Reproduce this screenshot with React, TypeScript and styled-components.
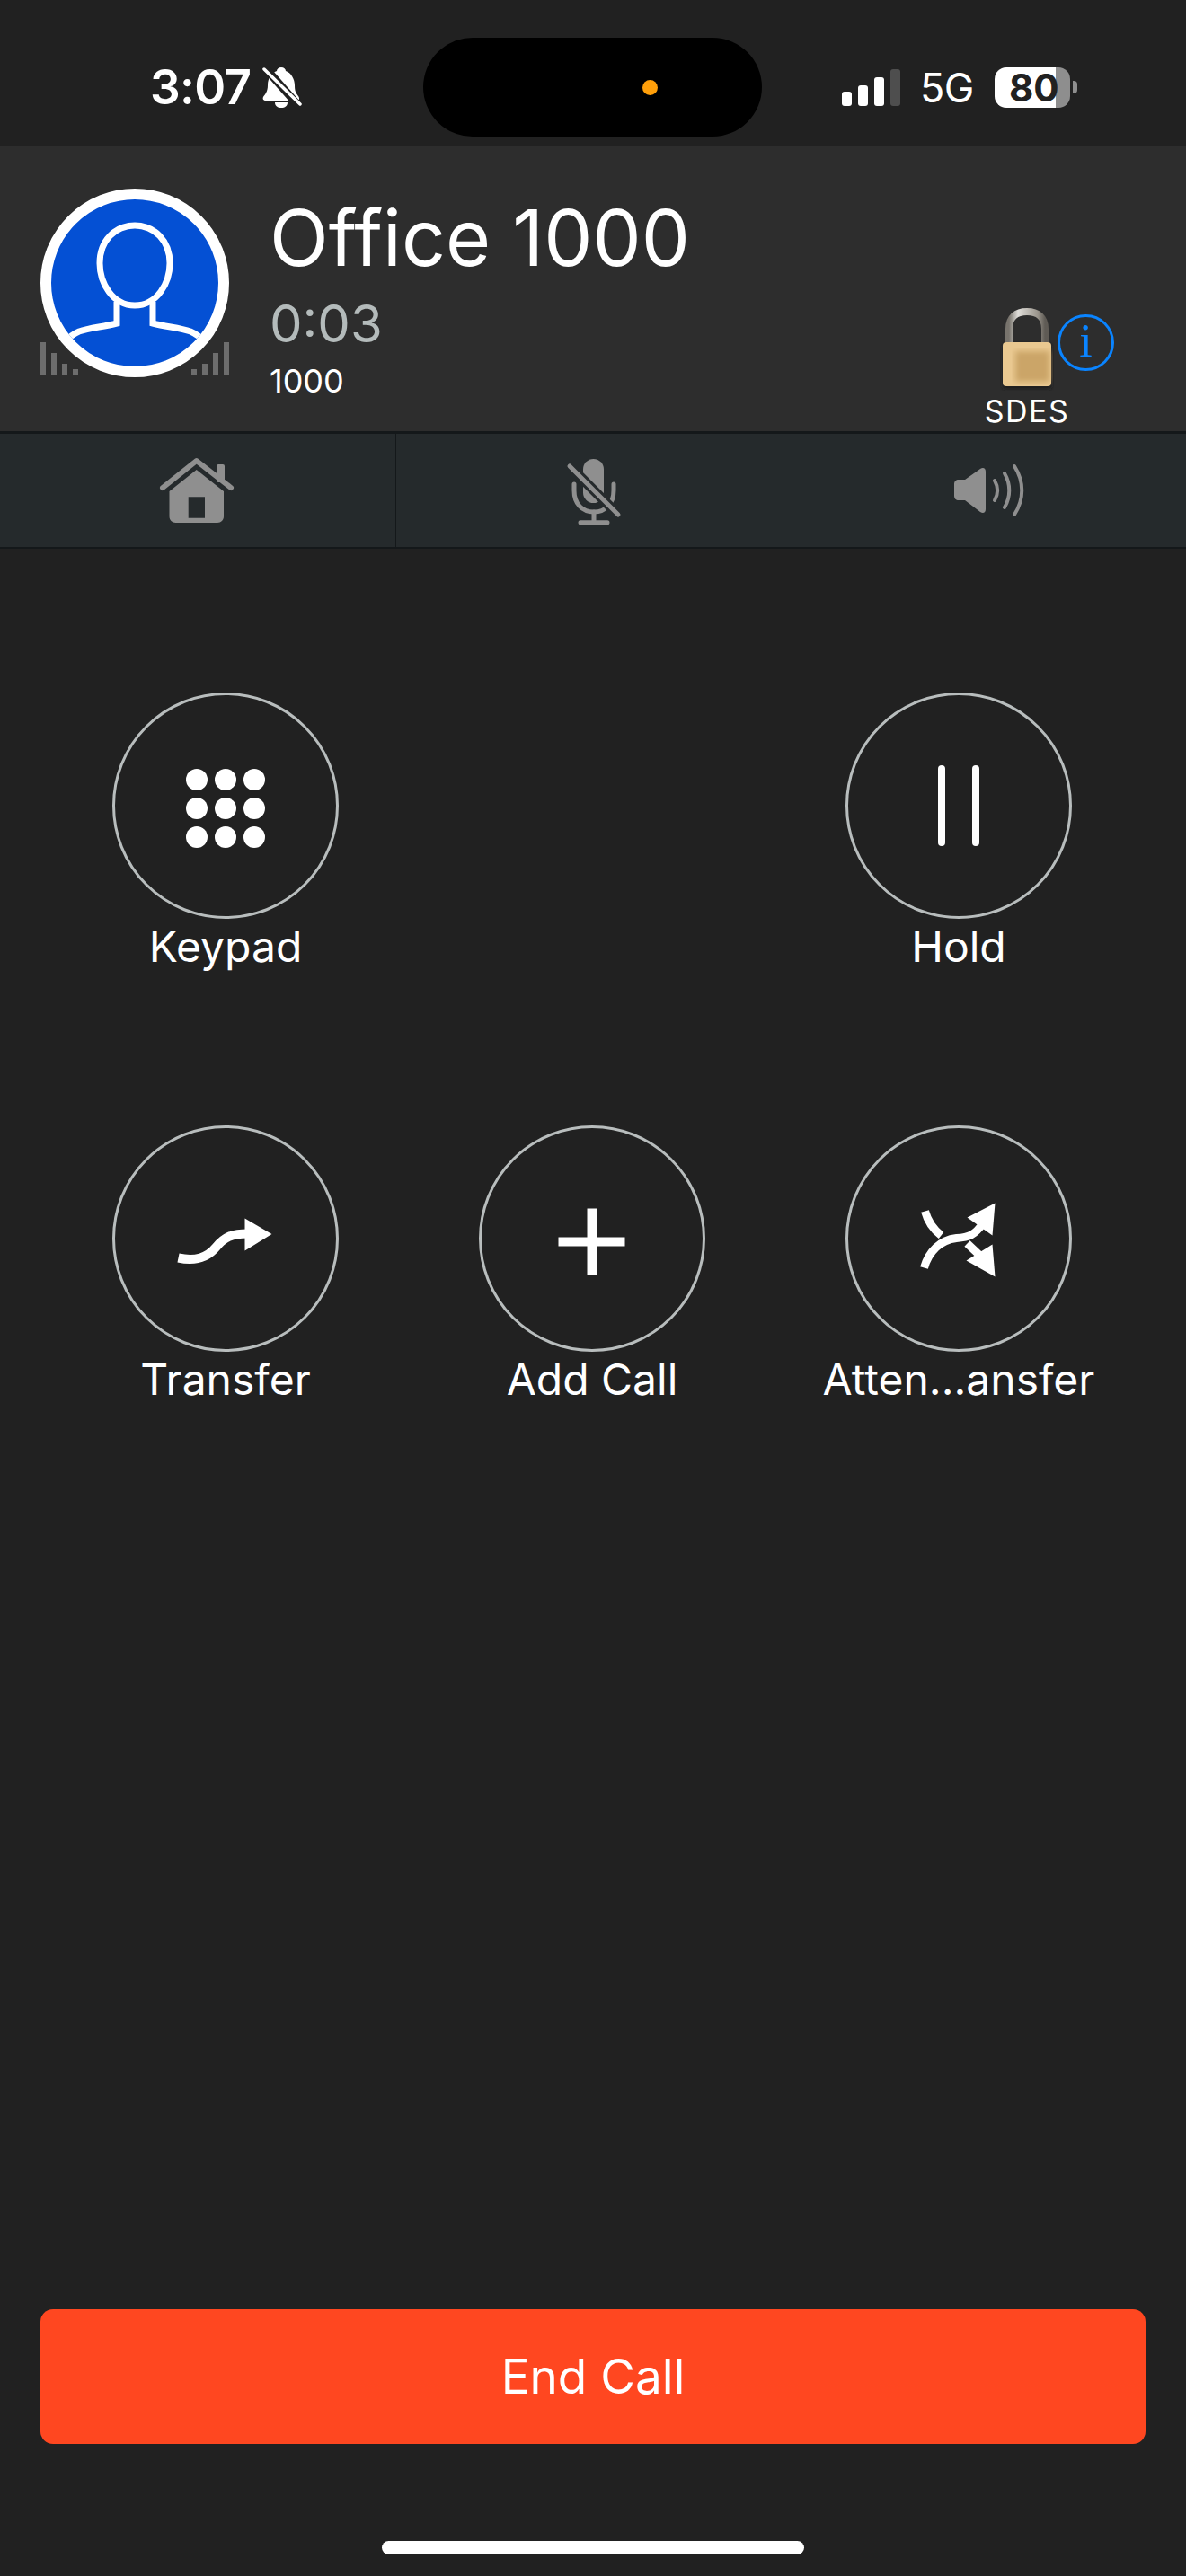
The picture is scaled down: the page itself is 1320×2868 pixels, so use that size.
import React from 'react'
import styled, { createGlobalStyle } from 'styled-components'

const GlobalStyle = createGlobalStyle`
  html, body {
    margin: 0;
    padding: 0;
    background: #212121;
  }
  * {
    box-sizing: border-box;
  }
`

const Screen = styled.div`
  width: 1320px;
  height: 2868px;
  display: flex;
  flex-direction: column;
  overflow: hidden;
  background: #212121;
  color: #fff;
  font-family: Inter, 'Liberation Sans', sans-serif;
`

/* status bar */
const StatusBar = styled.div`
  height: 162px;
  display: grid;
  grid-template-columns: 471px 377px 1fr;
  padding-top: 42px;
`
const StatusLeft = styled.div`
  height: 110px;
  display: flex;
  align-items: center;
  gap: 11px;
  padding-left: 167px;
`
const Time = styled.span`
  font-size: 53px;
  font-weight: 600;
  line-height: 1;
  letter-spacing: -0.7px;
`
const Island = styled.div`
  height: 110px;
  background: #000;
  border-radius: 55px;
  display: flex;
  align-items: center;
  justify-content: center;
`
const OrangeDot = styled.div`
  width: 17px;
  height: 17px;
  border-radius: 50%;
  background: #ff9f0a;
  margin-left: 128px;
`
const StatusRight = styled.div`
  height: 110px;
  display: flex;
  align-items: center;
  padding-left: 89px;
`
const SignalBars = styled.div`
  display: flex;
  align-items: flex-end;
  gap: 7px;
  height: 41px;
`
const SignalBar = styled.div<{ $h: number; $off?: boolean }>`
  width: 11px;
  height: ${p => p.$h}px;
  border-radius: 3px;
  background: ${p => (p.$off ? '#4e4e4e' : '#fff')};
`
const Network = styled.span`
  font-size: 45px;
  line-height: 1;
  margin-left: 22px;
  letter-spacing: -0.5px;
`
const Battery = styled.div`
  width: 84px;
  height: 45px;
  margin-left: 23px;
  border-radius: 13px;
  background: linear-gradient(to right, #fff 68px, #8e8e8e 68px);
  color: #212121;
  font-size: 42px;
  font-weight: 700;
  line-height: 45px;
  padding-left: 16px;
`
const BatteryNub = styled.div`
  width: 5px;
  height: 14px;
  margin-left: 3px;
  border-radius: 0 4px 4px 0;
  background: #8e8e8e;
`

/* caller header */
const CallHeader = styled.header`
  height: 318px;
  background: #2d2d2d;
  display: flex;
  padding: 48px 0 0 45px;
`
const AvatarWrap = styled.div`
  position: relative;
  width: 210px;
  height: 210px;
  flex: none;
`
const Meter = styled.div<{ $side: 'left' | 'right' }>`
  position: absolute;
  top: 171px;
  ${p => p.$side}: 0;
  height: 36px;
  display: flex;
  align-items: flex-end;
  gap: 6px;
`
const MeterBar = styled.div<{ $h: number }>`
  width: 6px;
  height: ${p => p.$h}px;
  background: #6d6d6d;
`
const Avatar = styled.div`
  position: relative;
  width: 210px;
  height: 210px;
  border-radius: 50%;
  border: 12px solid #fff;
  background: #0450d4;
  overflow: hidden;
`
const CallerInfo = styled.div`
  display: flex;
  flex-direction: column;
  margin-left: 45px;
  flex: 1;
`
const CallerName = styled.div`
  font-size: 86px;
  line-height: 104px;
  margin-top: 3px;
  white-space: nowrap;
`
const CallTimer = styled.div`
  font-size: 58px;
  line-height: 70px;
  color: #b4bbbb;
  margin-top: 8px;
`
const CallerNumber = styled.div`
  font-size: 36px;
  line-height: 42px;
  margin-top: 8px;
`
const SecurityBlock = styled.div`
  position: relative;
  width: 90px;
  margin: 133px 132px 0 0;
  display: flex;
  flex-direction: column;
  align-items: center;
`
const SecurityLabel = styled.div`
  font-size: 34px;
  line-height: 40px;
  letter-spacing: 1.5px;
  margin-top: 3px;
  white-space: nowrap;
`
const InfoBadge = styled.div`
  position: absolute;
  left: 79px;
  top: 7px;
  width: 63px;
  height: 63px;
  border-radius: 50%;
  border: 3px solid #0a84ff;
  color: #0a84ff;
  font-family: 'Liberation Serif', serif;
  font-size: 52px;
  line-height: 54px;
  text-align: center;
`

/* audio toolbar */
const Toolbar = styled.nav`
  display: grid;
  grid-template-columns: 440px 440px 1fr;
  gap: 1px;
  height: 131px;
  padding: 3px 0 2px;
  background: #14181a;
`
const ToolCell = styled.div`
  background: #252a2c;
  display: flex;
  align-items: center;
  justify-content: center;
`

/* call actions */
const Actions = styled.main`
  flex: 1;
  display: grid;
  grid-template-columns: repeat(3, 408px);
  grid-auto-rows: 482px;
  padding: 160px 0 0 47px;
`
const Action = styled.div<{ $col?: number }>`
  display: flex;
  flex-direction: column;
  align-items: center;
  grid-column: ${p => p.$col ?? 'auto'};
`
const ActionCircle = styled.div`
  width: 252px;
  height: 252px;
  border-radius: 50%;
  border: 3.5px solid #b8bdbd;
  display: flex;
  align-items: center;
  justify-content: center;
`
const ActionLabel = styled.div`
  font-size: 48px;
  line-height: 58px;
  margin-top: 2px;
  white-space: nowrap;
`

/* bottom */
const Footer = styled.footer`
  display: flex;
  flex-direction: column;
  align-items: center;
  padding: 0 45px 24px;
`
const EndCallButton = styled.button`
  width: 100%;
  height: 150px;
  border: 0;
  border-radius: 14px;
  background: #ff4720;
  color: #fff;
  font-family: inherit;
  font-size: 53px;
`
const HomeIndicator = styled.div`
  width: 470px;
  height: 15px;
  margin-top: 108px;
  border-radius: 8px;
  background: #fff;
`

const MutedBellIcon = () => (
  <svg width="46" height="48" viewBox="288 74 46 48">
    <path
      fill="#fff"
      d="M311 76c3 0 5 2 5 4 6 2 10 9 10 16 0 6 1 8 4 12 2 3 1 5-2 5h-34c-3 0-4-2-3-4 2-3 5-6 5-13 0-8 4-14 10-16 0-2 2-4 5-4z"
    />
    <path fill="#fff" d="M304 115h14c0 4-3 6-7 6s-7-2-7-6z" />
    <path d="M290 73l44 50" stroke="#212121" strokeWidth="9" />
    <path d="M292 78l40 39" stroke="#fff" strokeWidth="3.5" strokeLinecap="round" />
  </svg>
)

const PersonIcon = () => (
  <svg width="186" height="186" viewBox="57 222 186 186" style={{ display: 'block' }}>
    <path
      fill="none"
      stroke="#fff"
      strokeWidth="7"
      d="M150 251c-22 0-39 17-39 42 0 22 14 47 39 47s39-25 39-47c0-25-17-42-39-42z"
    />
    <path
      fill="none"
      stroke="#fff"
      strokeWidth="7"
      d="M130 336v24c-16 4-30 5-42 9-7 3-12 7-17 13M170 336v24c16 4 30 5 42 9 7 3 12 7 17 13"
    />
  </svg>
)

const PadlockIcon = () => (
  <svg width="60" height="92" viewBox="0 0 60 92" style={{ display: 'block' }}>
    <defs>
      <linearGradient id="shackle" x1="0" x2="1" y1="0" y2="0">
        <stop offset="0" stopColor="#77736c" />
        <stop offset="0.25" stopColor="#e0deda" />
        <stop offset="0.8" stopColor="#9a958c" />
        <stop offset="1" stopColor="#5f5b55" />
      </linearGradient>
      <filter id="soft">
        <feGaussianBlur stdDeviation="3" />
      </filter>
      <filter id="drop">
        <feGaussianBlur stdDeviation="2" />
      </filter>
    </defs>
    <rect x="3" y="40" width="54" height="50" rx="4" fill="#1a1a1a" filter="url(#drop)" />
    <path d="M10 38V23C10 10 18 4 30 4s20 6 20 19v15" fill="none" stroke="url(#shackle)" strokeWidth="8" />
    <rect x="3" y="38" width="54" height="49" rx="4" fill="#e9c890" />
    <rect x="17" y="48" width="38" height="34" fill="#cba568" filter="url(#soft)" />
  </svg>
)

const HomeIcon = () => (
  <svg width="90" height="76" viewBox="44 18 90 76">
    <path d="M50 53l37.700-30L126 53" fill="none" stroke="#8f8f8f" strokeWidth="6" strokeLinecap="round" strokeLinejoin="round" />
    <rect x="110" y="27" width="9" height="20" rx="2" fill="#8f8f8f" />
    <path
      fill="#8f8f8f"
      fillRule="evenodd"
      d="M57.500 57L87.700 33 118 57v28c0 4-3 7-7 7H64.500c-4 0-7-3-7-7zM78.700 63.300v23.400H97V63.300z"
    />
  </svg>
)

const MutedMicIcon = () => (
  <svg width="62" height="80" viewBox="190 35 62 80">
    <rect x="209" y="40" width="23" height="49" rx="11.500" fill="#8f8f8f" />
    <path d="M199 68v7c0 15 9 24 22 24s22-9 22-24v-7" fill="none" stroke="#8f8f8f" strokeWidth="5" strokeLinecap="round" />
    <path d="M221 99v10M206 110.700h30" stroke="#8f8f8f" strokeWidth="5" strokeLinecap="round" />
    <path d="M194 48l54 54" stroke="#252a2c" strokeWidth="11" />
    <path d="M194 48l54 54" stroke="#8f8f8f" strokeWidth="5" strokeLinecap="round" />
  </svg>
)

const SpeakerIcon = () => (
  <svg width="82" height="64" viewBox="160 215 82 64">
    <path
      fill="#8f8f8f"
      d="M167 235h7l17-12c3-2 6-1 6 3v42c0 4-3 5-6 3l-17-13h-7c-3 0-5-2-5-5v-13c0-3 2-5 5-5z"
    />
    <g fill="none" stroke="#8f8f8f" strokeWidth="4" strokeLinecap="round">
      <path d="M207 236c4 7 4 15 0 22" />
      <path d="M218 228c7 12 7 26 0 38" />
      <path d="M229 220c11 17 11 37 0 54" />
    </g>
  </svg>
)

const KeypadIcon = () => (
  <svg width="88" height="94" viewBox="0 -6 88 94">
    {[12, 44, 76].flatMap(y =>
      [12, 44, 76].map(x => <circle key={`${x}-${y}`} cx={x} cy={y} r="12" fill="#fff" />),
    )}
  </svg>
)

const HoldIcon = () => (
  <svg width="46" height="90" viewBox="0 0 46 90">
    <rect x="0" width="8" height="90" rx="4" fill="#fff" />
    <rect x="38" width="8" height="90" rx="4" fill="#fff" />
  </svg>
)

const TransferIcon = () => (
  <svg width="245" height="245" viewBox="3.500 3.500 245 245">
    <path d="M73 147c19 4 32 0 42-12 9-11 17-15 35-15" fill="none" stroke="#fff" strokeWidth="10" />
    <path d="M147 103l30 17.500-30 18.500z" fill="#fff" />
  </svg>
)

const PlusIcon = () => (
  <svg width="245" height="245" viewBox="3.500 3.500 245 245">
    <path d="M120 92h11v74h-11z" fill="#fff" />
    <path d="M88 124h74v10H88z" fill="#fff" />
  </svg>
)

const AttendedTransferIcon = () => (
  <svg width="245" height="245" viewBox="3.500 3.500 245 245">
    <g fill="none" stroke="#fff" strokeWidth="9">
      <path d="M87 158c5-18 18-31 36-33 14-1 20-3 30-17" />
      <path d="M88 95c3 11 9 20 18 27" />
      <path d="M135 131l17 16" />
    </g>
    <path d="M166 86l-31 16 28 20z" fill="#fff" />
    <path d="M166 168l-32-18 29-18z" fill="#fff" />
  </svg>
)

const App = () => {
  return (
    <Screen>
      <GlobalStyle />
      <StatusBar>
        <StatusLeft>
          <Time>3:07</Time>
          <MutedBellIcon />
        </StatusLeft>
        <Island>
          <OrangeDot />
        </Island>
        <StatusRight>
          <SignalBars>
            <SignalBar $h={16} />
            <SignalBar $h={23} />
            <SignalBar $h={32} />
            <SignalBar $h={41} $off />
          </SignalBars>
          <Network>5G</Network>
          <Battery>80</Battery>
          <BatteryNub />
        </StatusRight>
      </StatusBar>

      <CallHeader>
        <AvatarWrap>
          <Meter $side="left">
            {[36, 24, 12, 6].map((h, i) => (
              <MeterBar key={i} $h={h} />
            ))}
          </Meter>
          <Meter $side="right">
            {[6, 12, 24, 36].map((h, i) => (
              <MeterBar key={i} $h={h} />
            ))}
          </Meter>
          <Avatar>
            <PersonIcon />
          </Avatar>
        </AvatarWrap>
        <CallerInfo>
          <CallerName>Office 1000</CallerName>
          <CallTimer>0:03</CallTimer>
          <CallerNumber>1000</CallerNumber>
        </CallerInfo>
        <SecurityBlock>
          <PadlockIcon />
          <SecurityLabel>SDES</SecurityLabel>
          <InfoBadge>i</InfoBadge>
        </SecurityBlock>
      </CallHeader>

      <Toolbar>
        <ToolCell>
          <HomeIcon />
        </ToolCell>
        <ToolCell>
          <MutedMicIcon />
        </ToolCell>
        <ToolCell>
          <SpeakerIcon />
        </ToolCell>
      </Toolbar>

      <Actions>
        <Action>
          <ActionCircle>
            <KeypadIcon />
          </ActionCircle>
          <ActionLabel>Keypad</ActionLabel>
        </Action>
        <Action $col={3}>
          <ActionCircle>
            <HoldIcon />
          </ActionCircle>
          <ActionLabel>Hold</ActionLabel>
        </Action>
        <Action>
          <ActionCircle>
            <TransferIcon />
          </ActionCircle>
          <ActionLabel>Transfer</ActionLabel>
        </Action>
        <Action>
          <ActionCircle>
            <PlusIcon />
          </ActionCircle>
          <ActionLabel>Add Call</ActionLabel>
        </Action>
        <Action>
          <ActionCircle>
            <AttendedTransferIcon />
          </ActionCircle>
          <ActionLabel>Atten...ansfer</ActionLabel>
        </Action>
      </Actions>

      <Footer>
        <EndCallButton>End Call</EndCallButton>
        <HomeIndicator />
      </Footer>
    </Screen>
  )
}

export default App
